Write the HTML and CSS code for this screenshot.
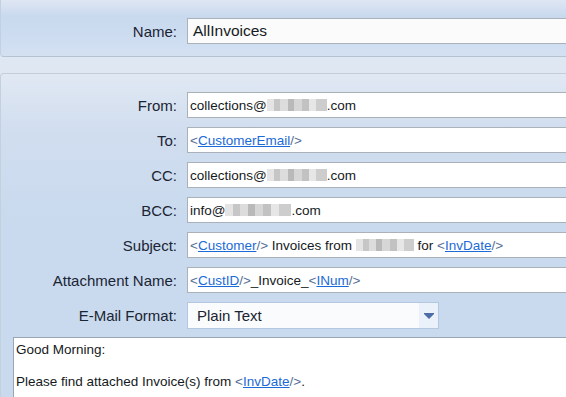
FILE: index.html
```html
<!DOCTYPE html>
<html lang="en">
<head>
    <meta charset="UTF-8">
    <meta name="viewport" content="width=device-width, initial-scale=1.0">
    <title>E-Mail Template</title>
    <link rel="stylesheet" href="styles.css">
</head>
<body>

    <!-- Template name -->
    <div class="name-panel">
        <div class="field-grid">
            <label class="field-label">Name:</label>
            <div class="field-box name-box">AllInvoices</div>
        </div>
    </div>

    <!-- Mail settings -->
    <div class="mail-panel">
        <div class="field-grid">
            <label class="field-label">From:</label>
            <div class="field-box">collections@<span class="redact" style="width: 60px"></span>.com</div>

            <label class="field-label">To:</label>
            <div class="field-box"><span class="tag">&lt;<a>CustomerEmail</a>/&gt;</span></div>

            <label class="field-label">CC:</label>
            <div class="field-box">collections@<span class="redact" style="width: 60px"></span>.com</div>

            <label class="field-label">BCC:</label>
            <div class="field-box">info@<span class="redact" style="width: 66px"></span>.com</div>

            <label class="field-label">Subject:</label>
            <div class="field-box"><span class="tag">&lt;<a>Customer</a>/&gt;</span>&nbsp;Invoices from&nbsp;<span class="redact" style="width: 58px"></span>&nbsp;for&nbsp;<span class="tag">&lt;<a>InvDate</a>/&gt;</span></div>

            <label class="field-label">Attachment Name:</label>
            <div class="field-box"><span class="tag">&lt;<a>CustID</a>/&gt;</span>_Invoice_<span class="tag">&lt;<a>INum</a>/&gt;</span></div>

            <label class="field-label">E-Mail Format:</label>
            <div class="select-box">
                <span class="select-text">Plain Text</span>
                <span class="select-arrow">
                    <svg width="10" height="6" viewBox="0 0 10 6"><path d="M0 0H10V1L5 6L0 1Z" fill="#4b6ea6"/></svg>
                </span>
            </div>
        </div>

        <!-- Message body -->
        <div class="body-box">
            <div>Good Morning:</div>
            <div>&nbsp;</div>
            <div>Please find attached Invoice(s) from <span class="tag">&lt;<a>InvDate</a>/&gt;</span>.</div>
        </div>
    </div>

</body>
</html>
```

FILE: styles.css
```css
body {
    margin: 0;
    height: 397px;
    overflow: hidden;
    background-color: #dfe7f2;
    font-family: "Liberation Sans", Arial, sans-serif;
    color: #1b2433;
}

.name-panel {
    box-sizing: border-box;
    height: 57px;
    padding-top: 18px;
    background: linear-gradient(#dfe6f3, #c8d9ee 17px, #cfdef1 44px, #d3e1f2);
    border-left: 1px solid #c2d1e2;
    border-bottom: 1px solid #b4c3d3;
    border-bottom-left-radius: 4px;
}

.mail-panel {
    box-sizing: border-box;
    height: 324px;
    margin-top: 16px;
    padding-top: 18px;
    background: linear-gradient(#e0e8f3, #d0ddef 60px, #c9daee 150px);
    border-left: 1px solid #c3d0de;
    border-top: 1px solid #c3ced9;
    border-top-left-radius: 4px;
}

.field-grid {
    display: grid;
    grid-template-columns: 176px 1fr;
    column-gap: 10px;
    row-gap: 9px;
    align-items: center;
}

.field-label {
    text-align: right;
    font-size: 15px;
}

.field-box {
    box-sizing: border-box;
    height: 26px;
    display: flex;
    align-items: center;
    padding-left: 2px;
    background-color: #ffffff;
    border: 1px solid #abb1b9;
    border-right: none;
    font-size: 13.5px;
    white-space: nowrap;
    color: #151a22;
}

.name-box {
    padding-left: 5px;
    font-size: 15.5px;
    background-color: #fbfbfb;
}

.tag {
    color: #566f96;
}

.tag a {
    color: #1c6ad6;
    text-decoration: underline;
}

.redact {
    display: inline-block;
    height: 12px;
    background: linear-gradient(90deg, #e4e4e4 0 12%, #c6c6c6 12% 22%, #dcdcdc 22% 35%, #b9b9b9 35% 45%, #d6d6d6 45% 58%, #c2c2c2 58% 70%, #e6e6e6 70% 82%, #cdcdcd 82% 100%);
}

.select-box {
    box-sizing: border-box;
    width: 252px;
    height: 27px;
    display: flex;
    background-color: #fafbfc;
    border: 1px solid #b4c8e2;
}

.select-text {
    flex: 1;
    display: flex;
    align-items: center;
    padding-left: 9px;
    font-size: 15px;
}

.select-arrow {
    width: 19px;
    display: flex;
    align-items: center;
    justify-content: center;
    background-color: #eaf1fa;
}

.body-box {
    box-sizing: border-box;
    height: 60px;
    margin-top: 8px;
    margin-left: 12px;
    padding: 4px 2px;
    background-color: #ffffff;
    border-top: 1px solid #9aa6b4;
    border-left: 1px solid #9aa6b4;
    font-size: 13.5px;
    line-height: 16px;
    color: #151a22;
}
```
